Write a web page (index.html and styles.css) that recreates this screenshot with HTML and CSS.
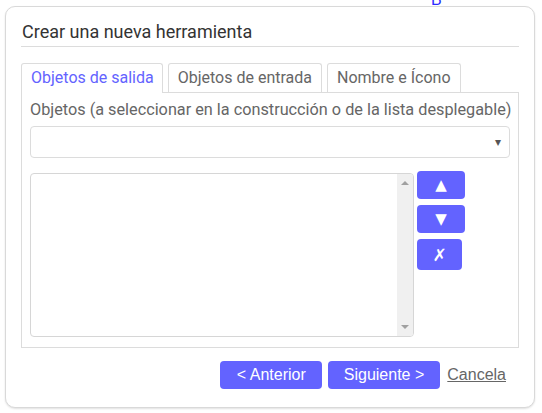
FILE: index.html
```html
<!DOCTYPE html>
<html>
<head>
<meta charset="utf-8">
<link rel="stylesheet" href="styles.css">
</head>
<body>
<span class="canvas-label">B</span>
<div class="dialog">
  <div class="title">Crear una nueva herramienta</div>
  <div class="tabs">
    <div class="tab active">Objetos de salida</div>
    <div class="tab">Objetos de entrada</div>
    <div class="tab">Nombre e Ícono</div>
  </div>
  <div class="panel">
    <div class="label">Objetos (a seleccionar en la construcción o de la lista desplegable)</div>
    <div class="select"><span class="select-arrow">▾</span></div>
    <div class="list-row">
      <div class="listbox">
        <div class="list-body"></div>
        <div class="scrollbar">
          <svg width="8" height="5" viewBox="0 0 8 5"><path d="M0 5 L4 1 L8 5 Z" fill="#a0a0a0"/></svg>
          <svg width="8" height="5" viewBox="0 0 8 5"><path d="M0 0 L8 0 L4 4 Z" fill="#a0a0a0"/></svg>
        </div>
      </div>
      <div class="side-buttons">
        <div class="sbtn">▲</div>
        <div class="sbtn">▼</div>
        <div class="sbtn del">✗</div>
      </div>
    </div>
  </div>
  <div class="footer">
    <div class="btn prev">&lt; Anterior</div>
    <div class="btn next">Siguiente &gt;</div>
    <a class="cancel">Cancela</a>
  </div>
</div>
</body>
</html>
```
FILE: styles.css
```css
html, body {
  margin: 0;
  padding: 0;
  background: #ffffff;
}
body {
  position: relative;
  width: 542px;
  height: 413px;
  overflow: hidden;
  font-family: Roboto, "Noto Sans", sans-serif;
}
.canvas-label {
  position: absolute;
  left: 431px;
  top: -9px;
  font-family: "Liberation Sans", Arial, sans-serif;
  font-size: 16px;
  line-height: 18px;
  color: #2b2bff;
}
.dialog {
  position: relative;
  box-sizing: border-box;
  margin: 6px 0 0 5px;
  width: 530px;
  height: 402px;
  border: 1px solid #d9d9d9;
  border-radius: 10px;
  background: #ffffff;
  box-shadow: 0 1px 2px rgba(0, 0, 0, 0.12);
  padding: 0 15px 0 15px;
  display: flex;
  flex-direction: column;
}
.title {
  font-size: 18px;
  line-height: 24px;
  color: #333333;
  padding: 13px 0 2px 1px;
  border-bottom: 1px solid #dcdcdc;
}
.tabs {
  display: flex;
  align-items: flex-end;
  gap: 5px;
  margin-top: 16px;
}
.tab {
  box-sizing: border-box;
  height: 29px;
  line-height: 28px;
  padding: 0 9px;
  border: 1px solid #dcdcdc;
  border-bottom: none;
  border-radius: 3px 3px 0 0;
  font-size: 16px;
  color: #666666;
  background: #ffffff;
}
.tab.active {
  position: relative;
  z-index: 1;
  height: 30px;
  margin-bottom: -1px;
  padding: 0 8px 0 9px;
  color: #6363ff;
}
.panel {
  box-sizing: border-box;
  width: 498px;
  height: 256px;
  border: 1px solid #dcdcdc;
  padding: 6px 8px 0 8px;
}
.label {
  font-size: 16.25px;
  line-height: 22px;
  color: #666666;
  white-space: nowrap;
}
.select {
  box-sizing: border-box;
  margin-top: 5px;
  width: 480px;
  height: 32px;
  border: 1px solid #dcdcdc;
  border-radius: 4px;
  display: flex;
  align-items: center;
  justify-content: flex-end;
  padding-right: 8px;
}
.select-arrow {
  font-size: 12px;
  color: #555555;
  line-height: 1;
}
.list-row {
  display: flex;
  gap: 3px;
  margin-top: 13px;
}
.listbox {
  box-sizing: border-box;
  width: 384px;
  height: 164px;
  margin-top: 2px;
  border: 1px solid #d6d6d6;
  border-radius: 4px;
  display: flex;
  overflow: hidden;
}
.list-body {
  flex: 1;
}
.scrollbar {
  width: 16px;
  background: #f0f0f0;
  display: flex;
  flex-direction: column;
  justify-content: space-between;
  align-items: center;
  padding: 6px 0 6px 0;
}
.scrollbar svg {
  display: block;
}
.side-buttons {
  display: flex;
  flex-direction: column;
  gap: 6px;
}
.sbtn {
  box-sizing: border-box;
  width: 48px;
  height: 28px;
  background: #6363ff;
  border-radius: 4px;
  color: #ffffff;
  font-family: "DejaVu Sans", sans-serif;
  font-size: 15px;
  display: flex;
  align-items: center;
  justify-content: center;
}
.sbtn.del {
  width: 45px;
  height: 31px;
  font-size: 17px;
  font-weight: bold;
}
.footer {
  display: flex;
  justify-content: flex-end;
  align-items: center;
  margin-top: 13px;
  padding-right: 13px;
}
.btn {
  box-sizing: border-box;
  height: 28px;
  line-height: 28px;
  padding: 0 16px;
  background: #6363ff;
  border-radius: 4px;
  color: #ffffff;
  font-family: "Liberation Sans", Arial, sans-serif;
  font-size: 16px;
  margin-right: 6px;
}
.btn.prev {
  padding: 0 16px 0 17px;
}
.btn.next {
  padding: 0 16px;
  margin-right: 7px;
}
.cancel {
  font-family: "Liberation Sans", Arial, sans-serif;
  font-size: 16px;
  color: #666666;
  text-decoration: underline;
}
```
